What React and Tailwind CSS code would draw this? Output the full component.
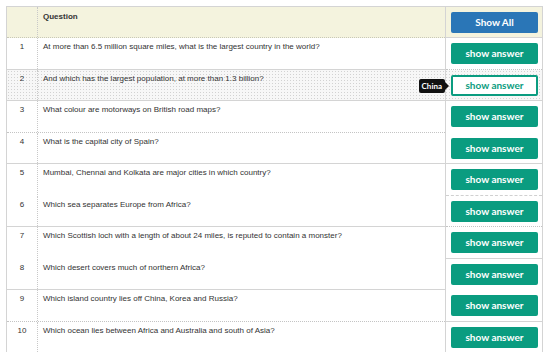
import React from "react";

const rows = [
  { q: "At more than 6.5 million square miles, what is the largest country in the world?", left: "solid", right: "dotted" },
  { q: "And which has the largest population, at more than 1.3 billion?", left: "solid", right: "solid", active: true, answer: "China" },
  { q: "What colour are motorways on British road maps?", left: "dotted", right: "none" },
  { q: "What is the capital city of Spain?", left: "solid", right: "solid" },
  { q: "Mumbai, Chennai and Kolkata are major cities in which country?", left: "none", right: "dashed" },
  { q: "Which sea separates Europe from Africa?", left: "solid", right: "dotted" },
  { q: "Which Scottish loch with a length of about 24 miles, is reputed to contain a monster?", left: "none", right: "solid" },
  { q: "Which desert covers much of northern Africa?", left: "solid", right: "none" },
  { q: "Which island country lies off China, Korea and Russia?", left: "dotted", right: "solid" },
  { q: "Which ocean lies between Africa and Australia and south of Asia?", left: "none", right: "none" },
];

// bottom rule for a cell, drawn as its own strip so side borders keep their style
const ruleClass = {
  solid: "border-t border-solid border-[#d4d4d4]",
  dotted: "border-t border-dotted border-[#c4c4c4]",
  dashed: "border-t border-dashed border-[#d0d0d0]",
  none: "border-t border-solid border-transparent",
};

const textFont = { fontFamily: '"Liberation Sans", Arial, sans-serif' };
const btnFont = { fontFamily: 'Lato, "Open Sans", sans-serif' };

function AnswerButton({ active, answer }) {
  if (active) {
    return (
      <div className="relative">
        <div
          className="absolute right-[89px] top-[4px] flex items-center"
          style={btnFont}
        >
          <div className="h-[14px] rounded-[2px] bg-[#111111] px-[3px] text-[8px] font-bold leading-[14px] text-white">
            {answer}
          </div>
          <div className="h-0 w-0 border-y-[4px] border-l-[4px] border-y-transparent border-l-[#111111]" />
        </div>
        <button
          className="flex h-[21px] w-[87px] items-center justify-center rounded-[2px] border-2 border-[#0a9c80] bg-white text-[10px] font-bold text-[#0a9c80]"
          style={btnFont}
        >
          show answer
        </button>
      </div>
    );
  }
  return (
    <button
      className="flex h-[21px] w-[87px] items-center justify-center rounded-[2px] bg-[#0a9c80] text-[10px] font-bold text-white"
      style={btnFont}
    >
      show answer
    </button>
  );
}

export default function App() {
  return (
    <div className="h-[352px] w-[550px] overflow-hidden bg-white pl-[6px] pt-[6px] text-[#333333]">
      <div className="w-[537px] border-l border-r border-t border-[#d4d4d4]">
        {/* header row */}
        <div className="flex h-[31px] bg-[#f4f3de]">
          <div className="flex flex-1 flex-col">
            <div className="flex flex-1">
              <div className="w-[31px] shrink-0 border-r border-dotted border-[#c8c8c8]" />
              <div
                className="flex-1 pl-[5px] pt-[5px] text-[8px] font-bold leading-[10px]"
                style={textFont}
              >
                Question
              </div>
            </div>
            <div className="border-t border-dotted border-[#c8c8b8]" />
          </div>
          <div className="flex w-[97px] shrink-0 flex-col border-l border-[#d4d4d4]">
            <div className="flex flex-1 items-center pl-[5px]">
              <button
                className="flex h-[21px] w-[87px] items-center justify-center rounded-[2px] bg-[#2a76b7] text-[10px] font-bold text-white"
                style={btnFont}
              >
                Show All
              </button>
            </div>
            <div className="border-t border-[#d4d4d4]" />
          </div>
        </div>

        {rows.map((r, i) => {
          const h = i % 2 === 0 ? "h-[32px]" : "h-[31px]";
          const bg = r.active
            ? "bg-[#f7f7f7] bg-[radial-gradient(#d2d2d2_0.5px,transparent_0.7px)] bg-[length:3px_3px]"
            : "bg-white";
          return (
            <div key={i} className={`flex ${h} ${bg}`}>
              <div className="flex flex-1 flex-col">
                <div className="flex flex-1">
                  <div
                    className="w-[31px] shrink-0 border-r border-dotted border-[#c8c8c8] pt-[4px] text-center text-[8px] leading-[10px]"
                    style={textFont}
                  >
                    {i + 1}
                  </div>
                  <div
                    className="flex-1 pl-[5px] pt-[4px] text-[8px] leading-[10px]"
                    style={textFont}
                  >
                    {r.q}
                  </div>
                </div>
                <div className={ruleClass[r.left]} />
              </div>
              <div className="flex w-[97px] shrink-0 flex-col border-l border-[#d4d4d4]">
                <div className="flex flex-1 items-center pl-[5px]">
                  <AnswerButton active={r.active} answer={r.answer} />
                </div>
                <div className={ruleClass[r.right]} />
              </div>
            </div>
          );
        })}
      </div>
    </div>
  );
}
